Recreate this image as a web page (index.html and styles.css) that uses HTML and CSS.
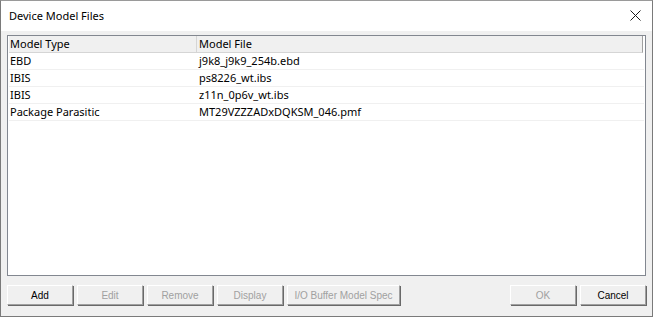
FILE: index.html
```html
<!DOCTYPE html>
<html lang="en">
<head>
  <meta charset="UTF-8" />
  <title>Device Model Files</title>
  <link rel="stylesheet" href="styles.css">
</head>
<body>
  <div class="window">
    <div class="titlebar">
      <span class="title">Device Model Files</span>
      <svg class="close" width="11" height="11" viewBox="0 0 11 11">
        <path d="M0.5 0.5 L10.5 10.5 M10.5 0.5 L0.5 10.5" stroke="#1a1a1a" stroke-width="1" />
      </svg>
    </div>

    <div class="client">
      <!-- Lista de modelos -->
      <div class="listbox">
        <div class="row head">
          <div class="cell col-type">Model Type</div>
          <div class="cell col-file">Model File</div>
        </div>
        <div class="row">
          <div class="cell col-type">EBD</div>
          <div class="cell col-file">j9k8_j9k9_254b.ebd</div>
        </div>
        <div class="row">
          <div class="cell col-type">IBIS</div>
          <div class="cell col-file">ps8226_wt.ibs</div>
        </div>
        <div class="row">
          <div class="cell col-type">IBIS</div>
          <div class="cell col-file">z11n_0p6v_wt.ibs</div>
        </div>
        <div class="row">
          <div class="cell col-type">Package Parasitic</div>
          <div class="cell col-file">MT29VZZZADxDQKSM_046.pmf</div>
        </div>
      </div>

      <!-- Botones -->
      <div class="buttons">
        <button class="btn">Add</button>
        <button class="btn" disabled>Edit</button>
        <button class="btn" disabled>Remove</button>
        <button class="btn" disabled>Display</button>
        <button class="btn wide" disabled>I/O Buffer Model Spec</button>
        <div class="spacer"></div>
        <button class="btn" disabled>OK</button>
        <button class="btn">Cancel</button>
      </div>
    </div>
  </div>
</body>
</html>
```

FILE: styles.css
```css
html, body {
  margin: 0;
  padding: 0;
}

body {
  width: 653px;
  height: 317px;
  background: #fff;
  font-family: 'Noto Sans', sans-serif;
  color: #000;
}

.window {
  box-sizing: border-box;
  width: 653px;
  height: 317px;
  border: 1px solid #7a7a7a;
  border-top-color: #9a9a9a;
  display: flex;
  flex-direction: column;
}

.titlebar {
  height: 30px;
  background: #fff;
  display: flex;
  align-items: center;
  justify-content: space-between;
  padding: 0 11px 2px 8px;
  box-sizing: border-box;
  flex-shrink: 0;
}

.title {
  font-size: 11px;
  color: #000;
}

.client {
  flex: 1;
  background: #f0f0f0;
  padding: 4px 6px 10px 6px;
  display: flex;
  flex-direction: column;
}

.listbox {
  height: 241px;
  box-sizing: border-box;
  background: #fff;
  border: 1px solid #828790;
  padding: 0 1px;
  font-size: 11px;
}

.row {
  display: flex;
  height: 17px;
  line-height: 16px;
  border-bottom: 1px solid #f0f0f0;
  box-sizing: border-box;
}

.row.head {
  height: 17px;
  line-height: 16px;
  background: #f0f0f0;
  border-bottom: 1px solid #d5d5d5;
  margin-right: 1px;
  border-right: 1px solid #a0a0a0;
}

.cell {
  box-sizing: border-box;
  padding-left: 1px;
  white-space: nowrap;
}

.col-type {
  width: 188px;
}

.row.head .col-type {
  border-right: 1px solid #d5d5d5;
}

.col-file {
  flex: 1;
  padding-left: 2px;
}

.buttons {
  display: flex;
  gap: 4px;
  margin-top: 9px;
}

.spacer {
  flex: 1;
}

.btn {
  width: 66px;
  height: 20px;
  padding: 0;
  font-family: 'Liberation Sans', sans-serif;
  font-size: 10px;
  color: #000;
  background: #f0f0f0;
  border: 1px solid;
  border-color: #fff #a0a0a0 #a0a0a0 #fff;
  box-shadow: 1px 1px 0 #696969;
}

.btn.wide {
  width: 113px;
}

.btn:disabled {
  color: #a0a0a0;
}
```
